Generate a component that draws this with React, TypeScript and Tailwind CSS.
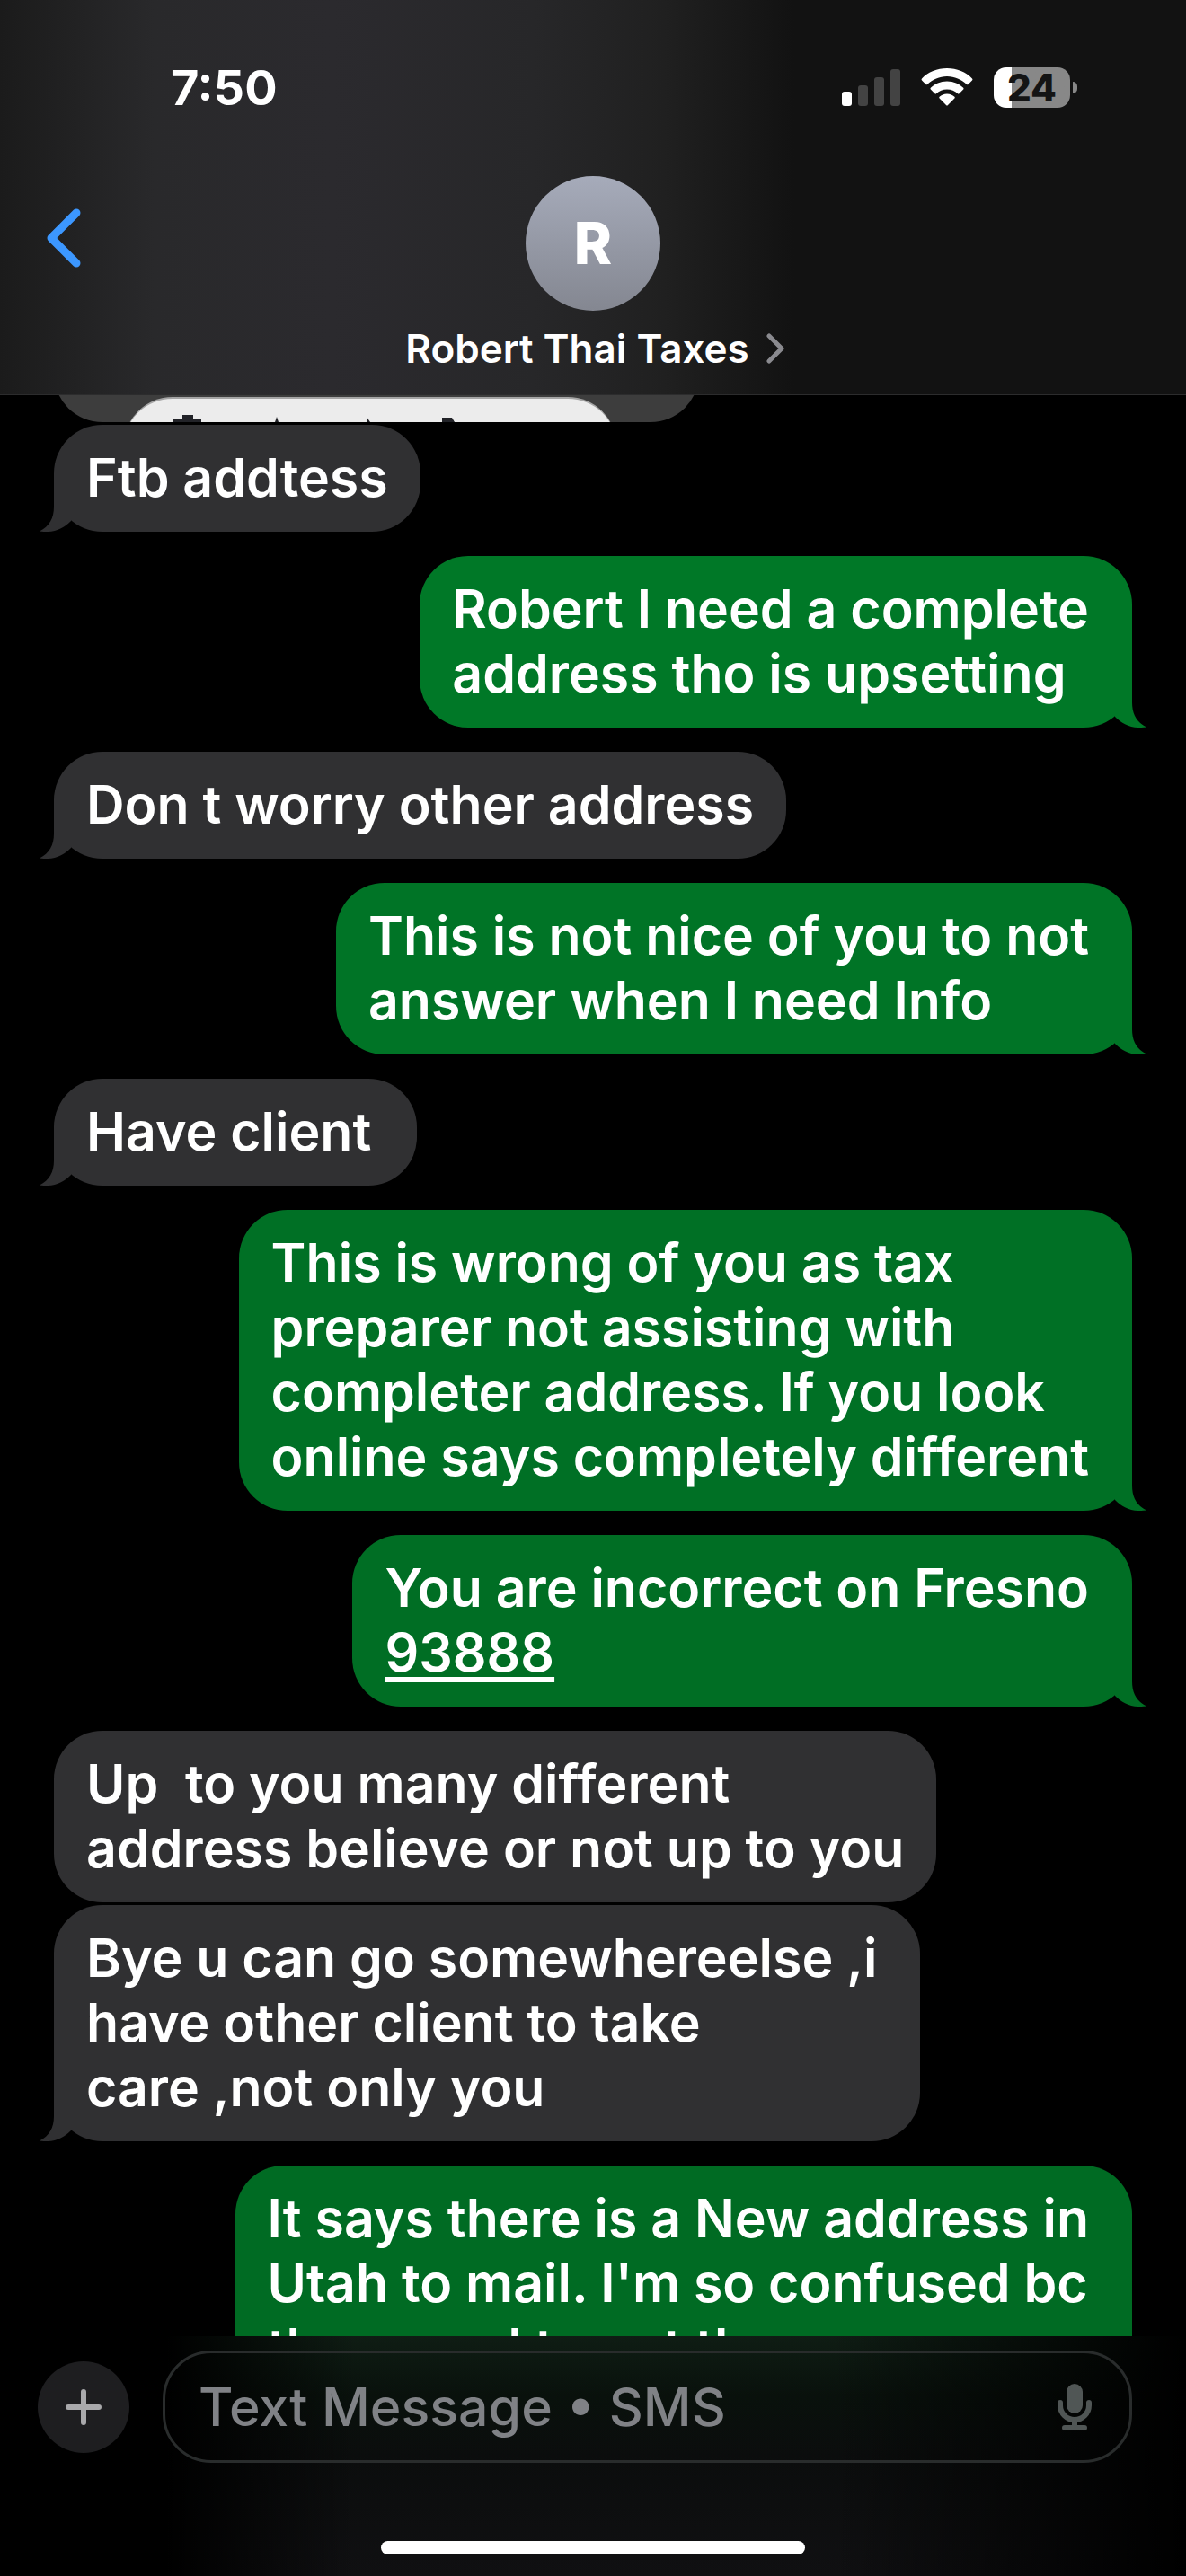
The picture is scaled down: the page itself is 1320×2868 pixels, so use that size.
import React, { useState } from 'react';

interface Message {
  id: number;
  from: 'me' | 'them';
  lines: string[];
  tone: string;
  tail: boolean;
  link?: boolean;
}

const messages: Message[] = [
  { id: 1, from: 'them', lines: ['Ftb addtess'], tone: 'pr-9 text-[#303032]', tail: true },
  { id: 2, from: 'me', lines: ['Robert I need a complete', 'address tho is upsetting'], tone: 'pr-12 text-[#007827]', tail: true },
  { id: 3, from: 'them', lines: ['Don t worry other address'], tone: 'pr-9 text-[#303032]', tail: true },
  { id: 4, from: 'me', lines: ['This is not nice of you to not', 'answer when I need Info'], tone: 'pr-12 text-[#007426]', tail: true },
  { id: 5, from: 'them', lines: ['Have client '], tone: 'pr-9 text-[#303032]', tail: true },
  {
    id: 6,
    from: 'me',
    lines: ['This is wrong of you as tax', 'preparer not assisting with', 'completer address. If you look', 'online says completely different'],
    tone: 'pr-12 text-[#007025]',
    tail: true,
  },
  { id: 7, from: 'me', lines: ['You are incorrect on Fresno', '93888'], tone: 'pr-12 text-[#006e24]', tail: true, link: true },
  { id: 8, from: 'them', lines: ['Up  to you many different', 'address believe or not up to you'], tone: 'pr-9 text-[#303032]', tail: false },
  { id: 9, from: 'them', lines: ['Bye u can go somewhereelse ,i', 'have other client to take', 'care ,not only you'], tone: 'pr-12 text-[#303032]', tail: true },
  { id: 10, from: 'me', lines: ['It says there is a New address in', "Utah to mail. I'm so confused bc", 'they need to get the'], tone: 'pr-12 text-[#006b23]', tail: false },
];

const Tail: React.FC<{ side: 'me' | 'them' }> = ({ side }) => (
  <svg
    viewBox="0 0 35 54"
    className={side === 'me' ? 'absolute bottom-0 -right-4 h-[54px] w-[35px] -scale-x-100' : 'absolute bottom-0 -left-4 h-[54px] w-[35px]'}
    fill="currentColor"
    aria-hidden="true"
  >
    <path d="M16 0V26C16 39 11 48 0 53.5C3 54 6 54 9 54C20 54 29 48 35 42V0Z" />
  </svg>
);

// Bubble colour comes from the text colour, so the tail can share it
const Bubble: React.FC<{ message: Message; tight: boolean }> = ({ message, tight }) => {
  const { from, lines, tone, tail, link } = message;
  return (
    <li className={`flex ${from === 'me' ? 'justify-end' : 'justify-start'} ${tight ? 'mt-[3px]' : 'mt-[27px]'}`}>
      <div className={`relative rounded-[54px] bg-current pt-[23px] pb-6 pl-9 ${tone}`}>
        {tail && <Tail side={from} />}
        <p className="relative text-[59px] leading-[72px] font-semibold whitespace-pre text-white">
          {lines.map((line, i) => (
            <span key={line} className="block">
              {link && i === lines.length - 1 ? (
                <a href="#map" className="underline decoration-[6px] underline-offset-[6px]">{line}</a>
              ) : (
                line
              )}
            </span>
          ))}
        </p>
      </div>
    </li>
  );
};

// Lower edge of the photo that has scrolled under the header
const PhotoMessage: React.FC = () => (
  <div className="flex h-[30px] items-end overflow-hidden">
    <div className="h-[119px] w-[718px] shrink-0 overflow-hidden rounded-b-[54px] bg-[#3d3d3d] pt-[91px] pl-[78px]">
      <div className="h-[60px] w-[548px] rounded-t-[54px] border-t-2 border-[#a5a5a5] bg-[#ececec]">
        <svg viewBox="0 0 548 26" className="h-[26px] w-[548px]" fill="#222328" aria-hidden="true">
          <path d="M55 26V22H65V18H77V22H86V26ZM168 26L170 20L172 26ZM270 26V20L274 26ZM354 26V21H365L368 26Z" />
        </svg>
      </div>
    </div>
  </div>
);

const StatusBar: React.FC = () => (
  <div className="flex h-[196px] items-start justify-between pt-[63px] pr-[121px] pl-[190px]">
    <span className="text-[54px] leading-[70px] font-bold text-white">7:50</span>
    <div className="flex h-[68px] items-center gap-[23px]">
      <svg viewBox="0 0 65 42" className="h-[42px] w-[65px]" fill="#434343" aria-label="Signal">
        <rect x="0" y="26" width="11" height="16" rx="3" fill="#fff" />
        <rect x="18" y="19" width="11" height="23" rx="3" />
        <rect x="36" y="10" width="11" height="32" rx="3" />
        <rect x="54" y="1" width="11" height="41" rx="3" />
      </svg>
      <svg viewBox="0 0 58 42" className="h-[42px] w-[58px]" fill="#fff" aria-label="Wi-Fi">
        <path d="M29 0C18 0 8 4 1 11.500Q0 12.500 1 13.500L5.500 18Q6.300 18.600 7 18C13 12.500 20.500 9 29 9S45 12.500 51 18Q51.700 18.600 52.500 18L57 13.500Q58 12.500 57 11.500C50 4 40 0 29 0Z" />
        <path d="M29 14.500C21.500 14.500 15.500 17.500 10.800 21.800Q10 22.700 10.800 23.600L15.500 28.300Q16.300 29 17 28.300C20.200 25.300 24.300 23.500 29 23.500S37.800 25.300 41 28.300Q41.700 29 42.500 28.300L47.200 23.600Q48 22.700 47.200 21.800C42.500 17.500 36.500 14.500 29 14.500Z" />
        <path d="M29 28.500C25.500 28.500 22.700 29.800 20.600 31.700Q19.700 32.600 20.600 33.500L28 41Q29 42 30 41L37.400 33.500Q38.300 32.600 37.400 31.700C35.300 29.800 32.500 28.500 29 28.500Z" />
      </svg>
      <div className="flex items-center gap-[3px]">
        <div className="flex h-[45px] w-[85px] items-center justify-center rounded-[14px] bg-linear-to-r from-white from-[20px] to-[#888] to-[20px]">
          <span className="text-[42px] leading-[45px] font-extrabold text-[#141414]">24</span>
        </div>
        <div className="h-[13px] w-[5px] rounded-r-full bg-[#888]" />
      </div>
    </div>
  </div>
);

const Header: React.FC = () => (
  <header className="relative shrink-0 border-b border-[#2c2c2d] bg-[linear-gradient(to_right,#1b1b1b,#29292b_13%,#2b2a2e_28%,#272729_45%,#202020_56%,#121212_67%)]">
    <StatusBar />
    <button type="button" aria-label="Back" className="absolute top-[226px] left-[46px] p-1">
      <svg viewBox="0 0 42 68" className="h-[68px] w-[42px]" fill="none" stroke="#3c97ff" strokeWidth="9" strokeLinecap="round" strokeLinejoin="round">
        <path d="M35 7L7 35L35 63" />
      </svg>
    </button>
    <div className="flex flex-col items-center">
      <div className="flex h-[150px] w-[150px] items-center justify-center rounded-full bg-linear-to-b from-[#a6abba] to-[#848791] text-[64px] font-extrabold text-white">
        R
      </div>
      <button type="button" className="mt-[14px] mb-[23px] ml-1 flex items-center gap-[19px]">
        <span className="text-[44px] leading-[56px] font-semibold text-white">Robert Thai Taxes</span>
        <svg viewBox="0 0 20 36" className="h-9 w-5" fill="none" stroke="#8a8a8f" strokeWidth="5" strokeLinecap="round" strokeLinejoin="round">
          <path d="M3 4L17 18L3 32" />
        </svg>
      </button>
    </div>
  </header>
);

const Composer: React.FC = () => {
  const [text, setText] = useState('');
  return (
    <footer className="shrink-0 bg-[linear-gradient(to_right,#000_14%,transparent_30%,transparent_70%,#000),linear-gradient(to_bottom,#0f1d14,#09110c_25%,#0b0d0d_50%,#101012)]">
      <form className="flex items-center gap-[37px] pt-4 pr-[60px] pl-[42px]" onSubmit={(e) => e.preventDefault()}>
        <button type="button" aria-label="Add" className="flex h-[102px] w-[102px] items-center justify-center rounded-full bg-[#1e1e20]">
          <svg viewBox="0 0 40 40" className="h-10 w-10" stroke="#a9a9ab" strokeWidth="6" strokeLinecap="round">
            <path d="M20 3V37M3 20H37" />
          </svg>
        </button>
        <label className="flex h-[125px] min-w-0 flex-1 items-center rounded-[54px] border-[3px] border-[#292c2c] pr-[42px] pl-[37px]">
          <input
            value={text}
            onChange={(e) => setText(e.target.value)}
            aria-label="Message"
            placeholder="Text Message • SMS"
            className="min-w-0 flex-1 bg-transparent text-[59px] leading-[72px] font-medium text-white outline-none placeholder:text-[#808286]"
          />
          <button type="button" aria-label="Dictate">
            <svg viewBox="0 0 38 52" className="h-[52px] w-[38px]" fill="none" stroke="#505655" strokeLinecap="round">
              <rect x="10" y="0" width="18" height="33" rx="9" fill="#505655" stroke="none" />
              <path d="M3 21V24A16 16 0 0 0 35 24V21" strokeWidth="6" />
              <path d="M19 41V48M8 49H30" strokeWidth="6" />
            </svg>
          </button>
        </label>
      </form>
      <div className="mx-auto mt-[87px] mb-6 h-[15px] w-[472px] rounded-full bg-white" />
    </footer>
  );
};

const App: React.FC = () => (
  <div className="flex h-screen flex-col bg-black font-[Inter,'Liberation_Sans',sans-serif]">
    <Header />
    <main className="min-h-0 flex-1 overflow-hidden px-[60px]">
      <PhotoMessage />
      <ul>
        {messages.map((message, i) => (
          <Bubble key={message.id} message={message} tight={i === 0 || (message.from === 'them' && messages[i - 1].from === 'them')} />
        ))}
      </ul>
    </main>
    <Composer />
  </div>
);

export default App;
